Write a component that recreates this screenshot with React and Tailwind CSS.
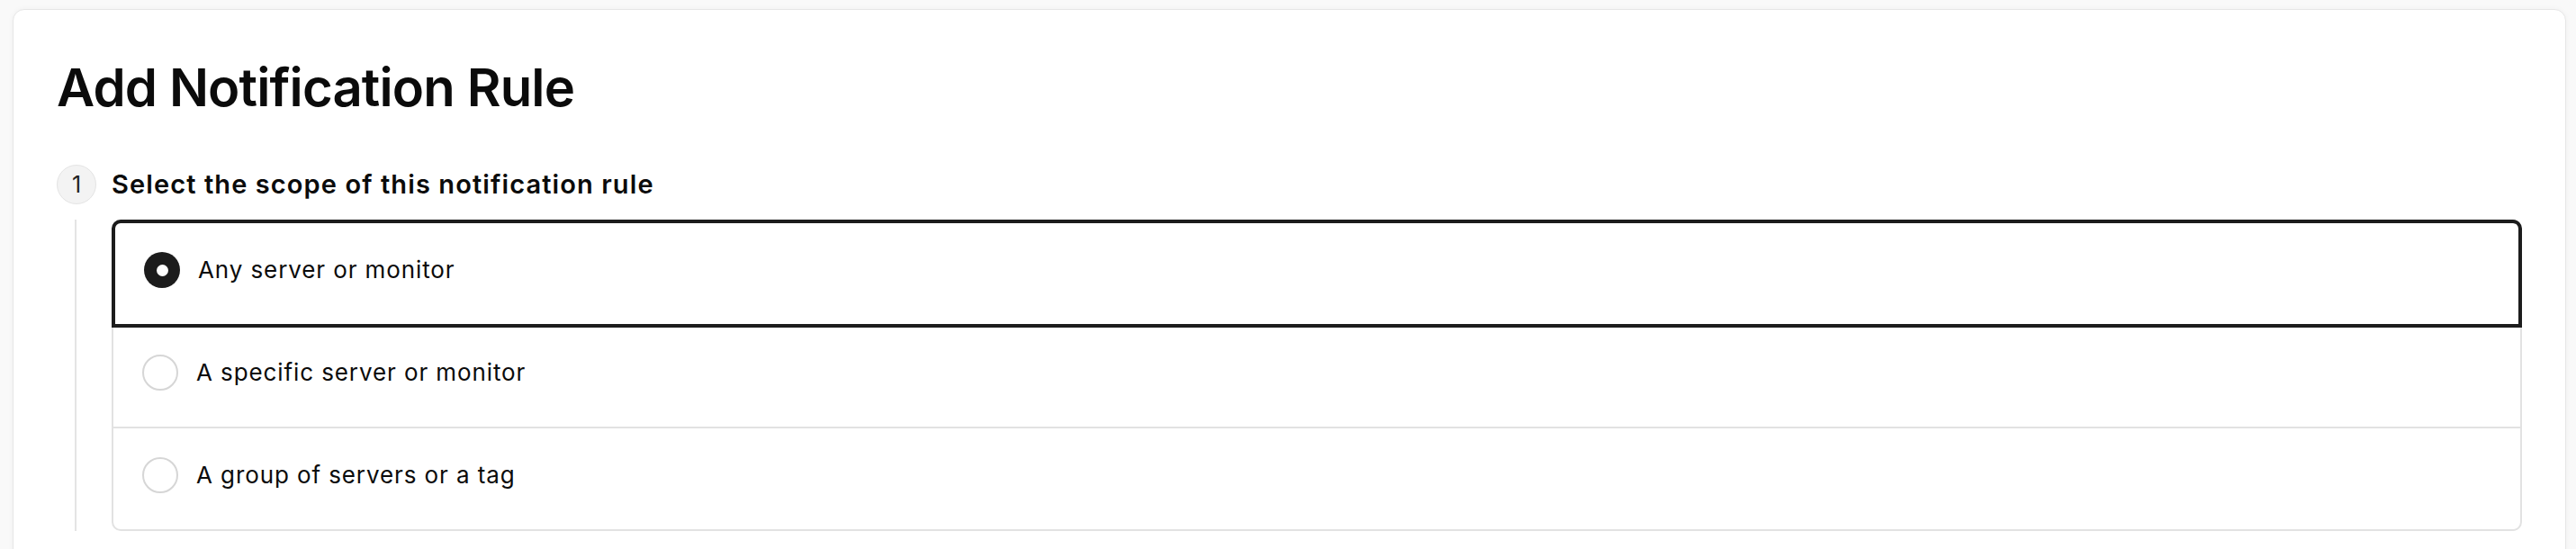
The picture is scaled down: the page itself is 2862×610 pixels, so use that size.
import React from "react";

function Radio({ checked }) {
  if (checked) {
    return (
      <div className="w-10 h-10 shrink-0 rounded-full bg-[#1c1c1c] flex items-center justify-center">
        <div className="w-[13px] h-[13px] rounded-full bg-white" />
      </div>
    );
  }
  return <div className="w-10 h-10 shrink-0 rounded-full border-2 border-[#d6d6d6] bg-white" />;
}

export default function App() {
  const font = { fontFamily: "Inter, 'Noto Sans', sans-serif" };
  return (
    <div className="min-h-[610px] bg-[#f9f9f9] pt-[10px] pl-[14px] pr-[11px]" style={font}>
      <div className="bg-white border border-[#e6e6e6] rounded-[13px] shadow-[0_0_6px_rgba(0,0,0,0.04)] px-12 pt-[57px] pb-16 min-h-[620px]">
        <h1 className="text-[58px] leading-[58px] font-semibold text-[#0b0b0b] tracking-[-0.85px]">
          Add Notification Rule
        </h1>

        <div className="mt-[57px] flex items-center">
          <div className="w-[61px] shrink-0">
            <div className="w-[44px] h-[44px] rounded-full bg-[#f3f3f3] border border-[#e4e4e4] flex items-center justify-center text-[25px] text-[#222] leading-none">
              1
            </div>
          </div>
          <h2 className="text-[29px] leading-[36px] font-semibold text-[#0b0b0b] tracking-[1.1px]">
            Select the scope of this notification rule
          </h2>
        </div>

        <div className="mt-[17px] flex">
          <div className="w-[61px] shrink-0 flex">
            <div className="ml-[20px] w-[2px] bg-[#e4e4e4]" />
          </div>
          <div className="flex-1 border-2 border-[#e2e2e2] rounded-[10px] bg-white">
            <div className="-mx-[2px] -mt-[2px] border-4 border-[#1c1c1c] rounded-t-[10px] pl-8 pt-8 pb-10 flex items-center gap-5">
              <Radio checked />
              <span className="text-[26px] leading-[32px] text-[#0b0b0b] tracking-[0.9px]">Any server or monitor</span>
            </div>
            <div className="pl-8 pt-[30px] pb-10 flex items-center gap-5 border-b-2 border-[#e2e2e2]">
              <Radio />
              <span className="text-[26px] leading-[32px] text-[#0b0b0b] tracking-[0.9px]">A specific server or monitor</span>
            </div>
            <div className="pl-8 pt-8 pb-10 flex items-center gap-5">
              <Radio />
              <span className="text-[26px] leading-[32px] text-[#0b0b0b] tracking-[0.9px]">A group of servers or a tag</span>
            </div>
          </div>
        </div>
      </div>
    </div>
  );
}
